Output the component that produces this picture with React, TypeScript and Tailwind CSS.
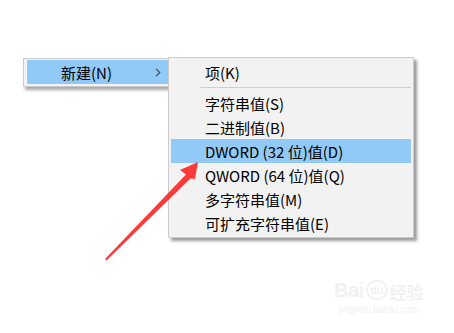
import React from 'react';

const font = { fontFamily: '"Noto Sans CJK SC", "Noto Sans", sans-serif' };

const items = [
  { label: '字符串值(S)' },
  { label: '二进制值(B)' },
  { label: 'DWORD (32 位)值(D)', active: true },
  { label: 'QWORD (64 位)值(Q)' },
  { label: '多字符串值(M)' },
  { label: '可扩充字符串值(E)' },
];

function MenuRow({ label, active }: { label: string; active?: boolean }) {
  return (
    <div
      className={
        'h-[24px] flex items-center pl-[34px] text-[15px] text-black leading-none ' +
        (active ? 'bg-[#91c9f7]' : '')
      }
    >
      {label}
    </div>
  );
}

export default function App() {
  return (
    <div className="relative w-[454px] h-[333px] bg-white overflow-hidden" style={font}>
      {/* parent menu */}
      <div className="absolute left-[23px] top-[58px] w-[160px] bg-[#f2f2f2] border border-[#cccccc] pt-[1px] pb-[2px] px-[3px] shadow-[2px_3px_3px_rgba(0,0,0,0.35)]">
        <div className="h-[24px] flex items-center pl-[34px] bg-[#91c9f7] text-[15px] text-black leading-none">
          <span className="w-[94px]">新建(N)</span>
          <svg width="6" height="9" viewBox="0 0 6 9" className="mt-[1px]">
            <path d="M1 0.8 L4.8 4.5 L1 8.2" fill="none" stroke="#444" strokeWidth="1.1" />
          </svg>
        </div>
      </div>

      {/* submenu */}
      <div className="absolute left-[168px] top-[57px] w-[246px] bg-[#f2f2f2] border border-[#cccccc] p-[2px] shadow-[3px_3px_3px_rgba(0,0,0,0.4)]">
        <MenuRow label="项(K)" />
        <div className="h-[7px] flex items-center pl-[29px]">
          <div className="h-px w-full bg-[#cdcdcd]" />
        </div>
        {items.map((it) => (
          <MenuRow key={it.label} label={it.label} active={it.active} />
        ))}
      </div>

      {/* red arrow */}
      <svg className="absolute left-0 top-0" width="454" height="333" viewBox="0 0 454 333">
        <polygon
          points="198,162 180,170 186,174.5 105,259 106.5,260.5 190.5,178.5 195,179"
          fill="#fd3a3a"
        />
      </svg>

      {/* watermark */}
      <div className="absolute left-[334px] top-[280px] flex flex-col items-center text-[#f1f1f1] leading-none">
        <div className="flex items-end gap-[2px]">
          <span className="text-[20px] font-bold tracking-tight" style={{ fontFamily: '"Liberation Sans", sans-serif' }}>Bai</span>
          <span className="w-[22px] h-[20px] rounded-full border-2 border-[#f1f1f1] text-[11px] font-bold flex items-center justify-center" style={{ fontFamily: '"Liberation Sans", sans-serif' }}>du</span>
          <span className="text-[17px] font-bold">经验</span>
        </div>
        <span className="text-[10px] mt-[5px]" style={{ fontFamily: '"Liberation Sans", sans-serif' }}>jingyan.baidu.com</span>
      </div>
    </div>
  );
}
